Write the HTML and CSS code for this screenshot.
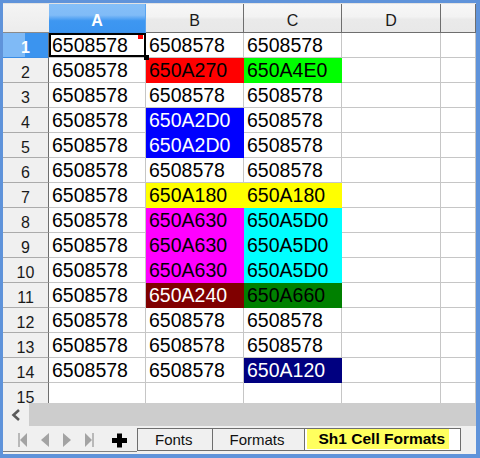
FILE: index.html
```html
<!DOCTYPE html>
<html>
<head>
<meta charset="utf-8">
<link rel="stylesheet" href="styles.css">
</head>
<body>
<div class="window">
  <div class="topline"></div>
  <div class="sheet">
    <div class="corner"></div>
    <div class="ch ch-sel">A</div>
    <div class="ch">B</div>
    <div class="ch">C</div>
    <div class="ch">D</div>
    <div class="ch"></div>

    <div class="rh rh-sel">1</div>
    <div class="c active">6508578<span class="note"></span></div>
    <div class="c">6508578</div>
    <div class="c">6508578</div>
    <div class="c"></div>
    <div class="c"></div>

    <div class="rh">2</div>
    <div class="c">6508578</div>
    <div class="c red">650A270</div>
    <div class="c lime">650A4E0</div>
    <div class="c"></div>
    <div class="c"></div>

    <div class="rh">3</div>
    <div class="c">6508578</div>
    <div class="c">6508578</div>
    <div class="c">6508578</div>
    <div class="c"></div>
    <div class="c"></div>

    <div class="rh">4</div>
    <div class="c">6508578</div>
    <div class="c blue">650A2D0</div>
    <div class="c">6508578</div>
    <div class="c"></div>
    <div class="c"></div>

    <div class="rh">5</div>
    <div class="c">6508578</div>
    <div class="c blue">650A2D0</div>
    <div class="c">6508578</div>
    <div class="c"></div>
    <div class="c"></div>

    <div class="rh">6</div>
    <div class="c">6508578</div>
    <div class="c">6508578</div>
    <div class="c">6508578</div>
    <div class="c"></div>
    <div class="c"></div>

    <div class="rh">7</div>
    <div class="c">6508578</div>
    <div class="c yellow">650A180</div>
    <div class="c yellow">650A180</div>
    <div class="c"></div>
    <div class="c"></div>

    <div class="rh">8</div>
    <div class="c">6508578</div>
    <div class="c magenta">650A630</div>
    <div class="c cyan">650A5D0</div>
    <div class="c"></div>
    <div class="c"></div>

    <div class="rh">9</div>
    <div class="c">6508578</div>
    <div class="c magenta">650A630</div>
    <div class="c cyan">650A5D0</div>
    <div class="c"></div>
    <div class="c"></div>

    <div class="rh">10</div>
    <div class="c">6508578</div>
    <div class="c magenta">650A630</div>
    <div class="c cyan">650A5D0</div>
    <div class="c"></div>
    <div class="c"></div>

    <div class="rh">11</div>
    <div class="c">6508578</div>
    <div class="c maroon">650A240</div>
    <div class="c green">650A660</div>
    <div class="c"></div>
    <div class="c"></div>

    <div class="rh">12</div>
    <div class="c">6508578</div>
    <div class="c">6508578</div>
    <div class="c">6508578</div>
    <div class="c"></div>
    <div class="c"></div>

    <div class="rh">13</div>
    <div class="c">6508578</div>
    <div class="c">6508578</div>
    <div class="c">6508578</div>
    <div class="c"></div>
    <div class="c"></div>

    <div class="rh">14</div>
    <div class="c">6508578</div>
    <div class="c">6508578</div>
    <div class="c navy">650A120</div>
    <div class="c"></div>
    <div class="c"></div>

    <div class="rh">15</div>
    <div class="c"></div>
    <div class="c"></div>
    <div class="c"></div>
    <div class="c"></div>
    <div class="c"></div>
  </div>

  <div class="hscroll">
    <div class="hs-btn">
      <svg width="10" height="12" viewBox="0 0 10 12"><polyline points="8,1 2.5,6 8,11" fill="none" stroke="#5a5a5a" stroke-width="2.6"/></svg>
    </div>
    <div class="hs-track"></div>
  </div>

  <div class="tabbar">
    <svg class="nav" width="134" height="25" viewBox="0 0 134 25">
      <rect x="15" y="7" width="2" height="14" fill="#b9b9b9"/>
      <polygon points="24,7 17,14 24,21" fill="#a3a3a3"/>
      <polygon points="46,7 38,14 46,21" fill="#a3a3a3"/>
      <polygon points="60,7 68,14 60,21" fill="#a3a3a3"/>
      <polygon points="82,7 89,14 82,21" fill="#a3a3a3"/>
      <rect x="89" y="7" width="2" height="14" fill="#b9b9b9"/>
      <rect x="109" y="12" width="15" height="5" fill="#000"/>
      <rect x="114" y="7.5" width="5" height="14" fill="#000"/>
    </svg>
    <div class="tabs">
      <div class="tab first">Fonts</div>
      <div class="tab">Formats</div>
      <div class="tab tab-active"><span class="tab-hl">Sh1 Cell Formats</span></div>
    </div>
  </div>
</div>
</body>
</html>
```

FILE: styles.css
```css
body {
  margin: 0;
}

.window {
  width: 480px;
  height: 458px;
  box-sizing: border-box;
  border-style: solid;
  border-color: #5f93da;
  border-width: 3px 4px 4px 3px;
  background: #f0f0f0;
  display: flex;
  flex-direction: column;
  overflow: hidden;
  font-family: "Liberation Sans", Arial, sans-serif;
}

.topline {
  flex: none;
  height: 1px;
  background: #e2e2e2;
}

.sheet {
  flex: none;
  height: 399px;
  overflow: hidden;
  background: #fff;
  display: grid;
  grid-template-columns: 46px 97px 98px 98px 99px 35px;
  grid-template-rows: 29px repeat(15, 25px);
}

.corner {
  box-sizing: border-box;
  background: linear-gradient(to bottom, #f4f4f4, #ececec);
  border-bottom: 1px solid #8a8a8a;
}

.ch {
  box-sizing: border-box;
  background: linear-gradient(to bottom, #f7f7f7 0%, #f3f3f3 45%, #eaeaea 55%, #e8e8e8 100%);
  border-right: 1px solid #6e6e6e;
  border-bottom: 1px solid #6e6e6e;
  display: flex;
  align-items: flex-end;
  justify-content: center;
  font-size: 16px;
  line-height: 18px;
  padding-bottom: 2px;
  color: #1a1a1a;
}

.ch-sel {
  background: linear-gradient(to bottom, #85bff8 0%, #80bbf7 40%, #3e97f1 60%, #3a94f0 100%);
  border-right: 1px solid #5aa4f0;
  border-bottom: 1px solid #3a8de6;
  color: #fff;
  font-weight: bold;
}

.rh {
  box-sizing: border-box;
  background: #f0f0f0;
  border-right: 1px solid #6e6e6e;
  border-bottom: 1px solid #ababab;
  text-align: center;
  font-size: 16px;
  line-height: 25px;
  padding-top: 2px;
  color: #1a1a1a;
}

.rh-sel {
  background: linear-gradient(to right, #7fbaf6 0%, #7fbaf6 50%, #3b94ef 50%, #3b94ef 100%);
  border-bottom: 1px solid #3a8de6;
  color: #fff;
  font-weight: bold;
}

.c {
  box-sizing: border-box;
  border-right: 1px solid #c6c6c6;
  border-bottom: 1px solid #c6c6c6;
  font-size: 19.5px;
  line-height: 24px;
  padding-left: 3px;
  white-space: nowrap;
  overflow: hidden;
  color: #000;
}

.active {
  position: relative;
  overflow: visible;
}

.active::after {
  content: "";
  position: absolute;
  left: 0;
  top: 0;
  right: -1px;
  bottom: 0;
  border: 2px solid #000;
}

.active::before {
  content: "";
  position: absolute;
  right: -4px;
  bottom: -3px;
  width: 5px;
  height: 5px;
  background: #000;
  z-index: 2;
}

.note {
  position: absolute;
  top: 2px;
  right: 2px;
  width: 5px;
  height: 4px;
  background: #ff0000;
}

.red { background: #ff0000; border-color: transparent; }
.lime { background: #00ff00; border-color: transparent; }
.blue { background: #0000ff; border-color: transparent; color: #fff; }
.yellow { background: #ffff00; border-color: transparent; }
.magenta { background: #ff00ff; border-color: transparent; }
.cyan { background: #00ffff; border-color: transparent; }
.maroon { background: #800000; border-color: transparent; color: #fff; }
.green { background: #008000; border-color: transparent; }
.navy { background: #000080; border-color: transparent; color: #fff; }

.hscroll {
  flex: none;
  height: 23px;
  display: flex;
}

.hs-btn {
  width: 26px;
  background: #f0f0f0;
  display: flex;
  align-items: center;
  justify-content: center;
}

.hs-track {
  flex: 1;
  background: #cdcdcd;
}

.tabbar {
  flex: none;
  height: 28px;
  display: flex;
  align-items: flex-start;
  background: #f0f0f0;
}

.nav {
  flex: none;
  display: block;
  border-bottom: 1px solid #808080;
}

.tabs {
  display: flex;
  margin-top: 2px;
}

.tab {
  box-sizing: border-box;
  height: 23px;
  border: 1px solid #6e6e6e;
  border-left: none;
  padding: 0 19px 0 17px;
  font-size: 15px;
  line-height: 21px;
  color: #111;
  background: #f0f0f0;
  white-space: nowrap;
}

.tab.first {
  border-left: 1px solid #6e6e6e;
}

.tab-active {
  background: #fff;
  padding: 0 11px 0 2px;
}

.tab-hl {
  display: block;
  height: 20px;
  line-height: 20px;
  background: #ffff5e;
  padding: 0 4px 0 12px;
  font-weight: bold;
  font-size: 15.5px;
  color: #000;
}
```
